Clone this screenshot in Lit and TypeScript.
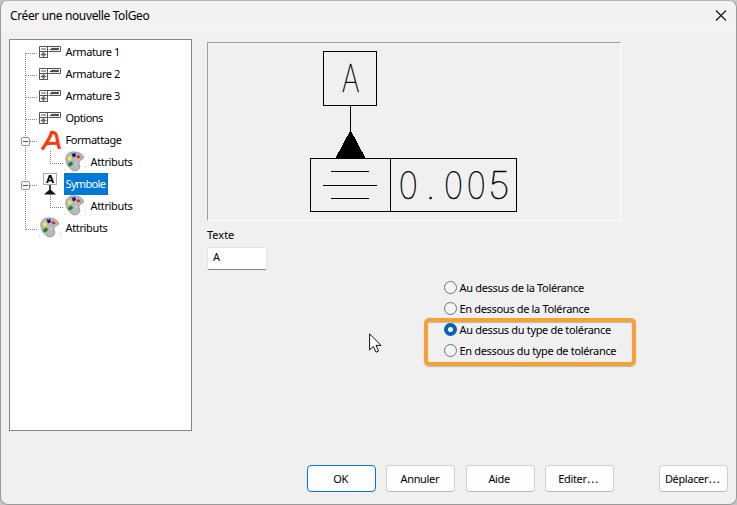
import { LitElement, html, svg, css, nothing } from "lit";
import { customElement, property } from "lit/decorators.js";

type IconName = "frame" | "letter" | "symbol" | "palette";

interface TreeRow {
  label: string;
  icon: IconName;
  child?: boolean;
  expander?: boolean;
  selected?: boolean;
  spacing: number;
}

const ROWS: TreeRow[] = [
  { label: "Armature 1", icon: "frame", spacing: -0.4 },
  { label: "Armature 2", icon: "frame", spacing: -0.4 },
  { label: "Armature 3", icon: "frame", spacing: -0.4 },
  { label: "Options", icon: "frame", spacing: -0.5 },
  { label: "Formattage", icon: "letter", expander: true, spacing: -0.45 },
  { label: "Attributs", icon: "palette", child: true, spacing: -0.35 },
  { label: "Symbole", icon: "symbol", expander: true, selected: true, spacing: -0.65 },
  { label: "Attributs", icon: "palette", child: true, spacing: -0.35 },
  { label: "Attributs", icon: "palette", spacing: -0.35 },
];

const icons = {
  frame: svg`
    <g transform="translate(29 5)">
      <path d="M.5 .5H21.500V5.500H9.500M.5 .5V11.500H9M.5 5.500H9M8.500 0V12" fill="none" stroke="#555"/>
      <path d="M2 3H7" stroke="#555"/>
      <circle cx="4.500" cy="8.500" r="1.600" fill="none" stroke="#444" stroke-width=".9"/>
      <path d="M1.500 8.500H7.500M4.500 6V11" stroke="#555" stroke-width=".7"/>
      <path d="M11 3.500H12" stroke="#333"/>
      <path d="M12.500 4L14 2M15 4L16.500 2M17.500 4L19 2" fill="none" stroke="#222" stroke-width="1.600"/>
      <path d="M12.500 2.500H20M12.500 3.500H20" stroke="#444" stroke-width=".7"/>
    </g>`,
  letter: svg`
    <path d="M32 20.500C36 15 40 9 41.500 3.500C45 3 46.500 5 47 9C47.500 13 48.500 17 49.500 20M34.500 15.500C39 14 43 14 48 14.500" fill="none" stroke="#ff3a10" stroke-width="3.200"/>`,
  symbol: svg`
    <rect x="33.500" y=".5" width="13" height="11" fill="#fff" stroke="#aaa"/>
    <text x="40" y="9.500" class="mini" text-anchor="middle">A</text>
    <path d="M40 12V17" stroke="#111" stroke-width="1.600"/>
    <path d="M34 21.500L39 17H41L46 21.500Z" fill="#111"/>`,
  palette: svg`
    <g transform="translate(30 0)">
      <path d="M1 6C2 2 6 .5 10 1C14 1 19 4 18.500 7C18 9 14.500 8.500 14 11C13.500 13 15.500 14.500 14.500 17C13.500 19.500 10.500 20.500 8 19.500C3 17 0 11 1 6Z" fill="#b9b9b9" stroke="#8c8c8c" stroke-width=".8"/>
      <path d="M10 11C11.500 10.500 12 12 11 13.500" stroke="#ddd" fill="none"/>
      <path d="M6.500 2L8.500 3L10 1.500L11 5L8 6.500Z" fill="#10108c"/>
      <path d="M11.500 5L13.500 4L16 6.500L12.500 7.500Z" fill="#f02020"/>
      <rect x="3" y="5.500" width="3.500" height="3.500" rx="1" fill="#f8f020"/>
      <ellipse cx="5.500" cy="13" rx="2.600" ry="1.900" transform="rotate(-30 5.500 13)" fill="#128c2c"/>
      <path d="M-.5 18V20" stroke="#f4d0d0"/>
      <path d="M20.500 15V21" stroke="#ddd" stroke-dasharray="2 1"/>
    </g>`,
};

@customElement("tol-tree")
class TolTree extends LitElement {
  static styles = css`
    :host { display: block; box-sizing: border-box; width: 183px; height: 392px; border: 1px solid #828790; background: #fff; padding-top: 1px; }
    .row { display: flex; height: 22px; }
    svg { flex: none; display: block; overflow: visible; }
    .label { display: flex; align-items: center; padding: 0 1.5px; white-space: pre; height: 22px; box-sizing: border-box; }
    .selected { background: #0078d7; color: #fff; padding-right: 2.5px; }
    .mini { font: bold 10.5px "DejaVu Sans", sans-serif; }
    .dots { stroke: #808080; stroke-dasharray: 1 1; shape-rendering: crispEdges; fill: none; }
  `;

  private guides(row: TreeRow, i: number) {
    const last = i === ROWS.length - 1;
    const top = i === 0 ? 12 : 0;
    const end = last ? 13 : 22;
    return svg`
      <path class="dots" d="M15.500 ${top}V${end}"/>
      ${row.child
        ? svg`<path class="dots" d="M40.500 0V12M40 12.500H53"/>`
        : svg`<path class="dots" d="M16 12.500H28"/>`}
      ${row.expander
        ? svg`<rect x="11.500" y="8.500" width="8" height="8" rx="1" fill="#f8f8f8" stroke="#919191"/>
              <path d="M13 12.500H18" stroke="#3250a0"/>`
        : nothing}`;
  }

  render() {
    return ROWS.map((row, i) => {
      const w = row.child ? 79 : 54;
      return html`<div class="row">
        <svg width=${w} height="22">${this.guides(row, i)}
          <g transform="translate(${row.child ? 25 : 0} 0)">${icons[row.icon]}</g>
        </svg>
        <span class="label ${row.selected ? "selected" : ""}" style="letter-spacing:${row.spacing}px">${row.label}</span>
      </div>`;
    });
  }
}

@customElement("tol-preview")
class TolPreview extends LitElement {
  static styles = css`
    :host { display: block; box-sizing: border-box; width: 414px; height: 179px; border: 1px solid; border-color: #a0a0a0 #fff #fff #a0a0a0; }
    svg { display: block; }
    .line { fill: none; stroke: #000; shape-rendering: crispEdges; }
    .solid { shape-rendering: crispEdges; }
    .cad { font: 100 37.5px Inter, Roboto, sans-serif; stroke: #000; stroke-width: .5px; }
  `;

  render() {
    return html`<svg width="412" height="177" viewBox="208 43 412 177">
      <path class="line" d="M323.500 51.500H376.500V105.500H323.500ZM350.500 106V131M310.500 158.500H516.500V211.500H310.500ZM390.500 158V211M331 171.500H369M323 185.500H377M331 198.500H369"/>
      <path class="solid" d="M350.500 130L366 159H335Z"/>
      <text class="cad" transform="translate(350.500 92) scale(.74 1)" text-anchor="middle">A</text>
      <g class="cad" text-anchor="middle">
        <text transform="translate(408.300 198.500) scale(.88 1)">0</text>
        <text x="430.500" y="198.500">.</text>
        <text transform="translate(453.500 198.500) scale(.88 1)">0</text>
        <text transform="translate(476.300 198.500) scale(.88 1)">0</text>
        <text transform="translate(499 198.500) scale(1.020 1)">5</text>
      </g>
    </svg>`;
  }
}

@customElement("tol-radio")
class TolRadio extends LitElement {
  @property() label = "";
  @property({ type: Boolean }) checked = false;

  static styles = css`
    :host { display: flex; align-items: center; height: 21px; gap: 2.500px; white-space: nowrap; }
    .dot { flex: none; box-sizing: border-box; width: 13px; height: 13px; border: 1px solid #707070; border-radius: 50%; background: #f5f5f5; }
    .on { border: 4px solid #0560b8; background: #fff; }
    .text { letter-spacing: -.33px; }
  `;

  render() {
    return html`<span class="dot ${this.checked ? "on" : ""}"></span><span class="text">${this.label}</span>`;
  }
}

@customElement("app-root")
class AppRoot extends LitElement {
  static styles = css`
    :host { display: block; width: 737px; height: 505px; background: #c4c4c4; font: 11px/14px "Noto Sans", sans-serif; color: #000; overflow: hidden; }
    .window { position: relative; box-sizing: border-box; width: 737px; height: 505px; border: 1px solid #9a9a9a; border-top-color: #b4b4b4; border-radius: 8px; background: #f0f0f0; overflow: hidden; display: flex; flex-direction: column; }
    .title { display: flex; align-items: center; justify-content: space-between; height: 30px; background: #f3f3f3; padding: 0 9px; font-size: 12px; letter-spacing: -.37px; flex: none; box-sizing: border-box; }
    .title svg { display: block; }
    .body { display: flex; gap: 15px; padding: 8px 8px 0; height: 400px; box-sizing: border-box; }
    .main { padding-top: 3px; width: 430px; }
    .caption { margin-top: 7px; height: 14px; }
    .input { margin-top: 5px; box-sizing: border-box; width: 60px; height: 23px; background: #fff; border: 1px solid #e4e4e4; border-bottom-color: #868686; border-radius: 2px; padding: 2px 5px; }
    .radios { margin: 7px 0 0 237px; }
    .mark { position: absolute; left: 423px; top: 317px; box-sizing: border-box; width: 212px; height: 48px; border: 4px solid #f4a236; border-radius: 5px; box-shadow: 0 1px 1px #8888, inset 0 1px 1px #8888; }
    .cursor { position: absolute; left: 368px; top: 332px; }
    .footer { display: flex; padding: 34px 8px 0 306px; gap: 10.333px; }
    .btn { box-sizing: border-box; width: 69px; height: 27px; padding-right: 2px; border: 1px solid #d0d0d0; border-bottom-color: #bababa; border-radius: 4px; background: #fdfdfd; display: flex; align-items: center; justify-content: center; letter-spacing: -.35px; }
    .primary { border-color: #0078d4; }
    .dots { font-family: "DejaVu Sans", sans-serif; font-size: 12px; letter-spacing: 0; }
    .push { margin-left: auto; }
  `;

  render() {
    return html`<div class="window">
      <div class="title"><span>Créer une nouvelle TolGeo</span>
        <svg width="12" height="12"><path d="M1 .5L11 10.500M11 .5L1 10.500" stroke="#111" stroke-width="1.100"/></svg>
      </div>
      <div class="body">
        <tol-tree></tol-tree>
        <div class="main">
          <tol-preview></tol-preview>
          <div class="caption">Texte</div>
          <div class="input">A</div>
          <div class="radios">
            <tol-radio label="Au dessus de la Tolérance"></tol-radio>
            <tol-radio label="En dessous de la Tolérance"></tol-radio>
            <tol-radio label="Au dessus du type de tolérance" checked></tol-radio>
            <tol-radio label="En dessous du type de tolérance"></tol-radio>
          </div>
        </div>
      </div>
      <div class="footer">
        <div class="btn primary">OK</div>
        <div class="btn">Annuler</div>
        <div class="btn">Aide</div>
        <div class="btn">Editer<span class="dots">…</span></div>
        <div class="btn push">Déplacer<span class="dots">…</span></div>
      </div>
      <div class="mark"></div>
      <svg class="cursor" width="13" height="20"><path d="M.6 .8V17L4.400 13.400L7 19.200L9.600 18L7 12.400H12Z" fill="#fff" stroke="#111" stroke-width="1"/></svg>
    </div>`;
  }
}
